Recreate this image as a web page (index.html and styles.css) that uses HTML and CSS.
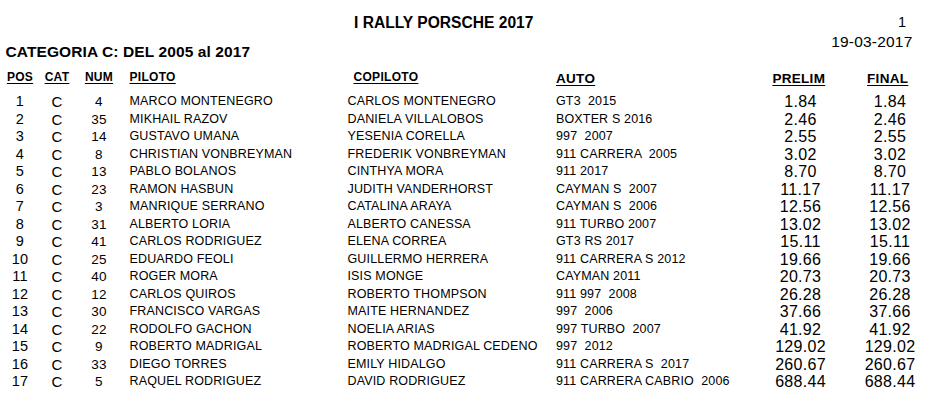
FILE: index.html
```html
<!DOCTYPE html>
<html lang="es">
<head>
<meta charset="utf-8">
<title>I RALLY PORSCHE 2017</title>
<link rel="stylesheet" href="styles.css">
</head>
<body>
<header class="top">
  <h1 class="title">I RALLY PORSCHE 2017</h1>
  <div class="page">1</div>
  <h2 class="cat-title">CATEGORIA C: DEL 2005 al 2017</h2>
  <div class="date">19-03-2017</div>
</header>
<main class="results">
  <div class="row head">
    <span class="c-pos">POS</span>
    <span class="c-cat">CAT</span>
    <span class="c-num">NUM</span>
    <span class="c-pil">PILOTO</span>
    <span class="c-cop">COPILOTO</span>
    <span class="c-auto big">AUTO</span>
    <span class="c-pre big">PRELIM</span>
    <span class="c-fin big">FINAL</span>
  </div>
  <div class="body">
    <div class="row"><span class="c-pos">1</span><span class="c-cat">C</span><span class="c-num">4</span><span class="c-pil">MARCO MONTENEGRO</span><span class="c-cop">CARLOS MONTENEGRO</span><span class="c-auto">GT3  2015</span><span class="c-pre">1.84</span><span class="c-fin">1.84</span></div>
    <div class="row"><span class="c-pos">2</span><span class="c-cat">C</span><span class="c-num">35</span><span class="c-pil">MIKHAIL RAZOV</span><span class="c-cop">DANIELA VILLALOBOS</span><span class="c-auto">BOXTER S 2016</span><span class="c-pre">2.46</span><span class="c-fin">2.46</span></div>
    <div class="row"><span class="c-pos">3</span><span class="c-cat">C</span><span class="c-num">14</span><span class="c-pil">GUSTAVO UMANA</span><span class="c-cop">YESENIA CORELLA</span><span class="c-auto">997  2007</span><span class="c-pre">2.55</span><span class="c-fin">2.55</span></div>
    <div class="row"><span class="c-pos">4</span><span class="c-cat">C</span><span class="c-num">8</span><span class="c-pil">CHRISTIAN VONBREYMAN</span><span class="c-cop">FREDERIK VONBREYMAN</span><span class="c-auto">911 CARRERA  2005</span><span class="c-pre">3.02</span><span class="c-fin">3.02</span></div>
    <div class="row"><span class="c-pos">5</span><span class="c-cat">C</span><span class="c-num">13</span><span class="c-pil">PABLO BOLANOS</span><span class="c-cop">CINTHYA MORA</span><span class="c-auto">911 2017</span><span class="c-pre">8.70</span><span class="c-fin">8.70</span></div>
    <div class="row"><span class="c-pos">6</span><span class="c-cat">C</span><span class="c-num">23</span><span class="c-pil">RAMON HASBUN</span><span class="c-cop">JUDITH VANDERHORST</span><span class="c-auto">CAYMAN S  2007</span><span class="c-pre">11.17</span><span class="c-fin">11.17</span></div>
    <div class="row"><span class="c-pos">7</span><span class="c-cat">C</span><span class="c-num">3</span><span class="c-pil">MANRIQUE SERRANO</span><span class="c-cop">CATALINA ARAYA</span><span class="c-auto">CAYMAN S  2006</span><span class="c-pre">12.56</span><span class="c-fin">12.56</span></div>
    <div class="row"><span class="c-pos">8</span><span class="c-cat">C</span><span class="c-num">31</span><span class="c-pil">ALBERTO LORIA</span><span class="c-cop">ALBERTO CANESSA</span><span class="c-auto">911 TURBO 2007</span><span class="c-pre">13.02</span><span class="c-fin">13.02</span></div>
    <div class="row"><span class="c-pos">9</span><span class="c-cat">C</span><span class="c-num">41</span><span class="c-pil">CARLOS RODRIGUEZ</span><span class="c-cop">ELENA CORREA</span><span class="c-auto">GT3 RS 2017</span><span class="c-pre">15.11</span><span class="c-fin">15.11</span></div>
    <div class="row"><span class="c-pos">10</span><span class="c-cat">C</span><span class="c-num">25</span><span class="c-pil">EDUARDO FEOLI</span><span class="c-cop">GUILLERMO HERRERA</span><span class="c-auto">911 CARRERA S 2012</span><span class="c-pre">19.66</span><span class="c-fin">19.66</span></div>
    <div class="row"><span class="c-pos">11</span><span class="c-cat">C</span><span class="c-num">40</span><span class="c-pil">ROGER MORA</span><span class="c-cop">ISIS MONGE</span><span class="c-auto">CAYMAN 2011</span><span class="c-pre">20.73</span><span class="c-fin">20.73</span></div>
    <div class="row"><span class="c-pos">12</span><span class="c-cat">C</span><span class="c-num">12</span><span class="c-pil">CARLOS QUIROS</span><span class="c-cop">ROBERTO THOMPSON</span><span class="c-auto">911 997  2008</span><span class="c-pre">26.28</span><span class="c-fin">26.28</span></div>
    <div class="row"><span class="c-pos">13</span><span class="c-cat">C</span><span class="c-num">30</span><span class="c-pil">FRANCISCO VARGAS</span><span class="c-cop">MAITE HERNANDEZ</span><span class="c-auto">997  2006</span><span class="c-pre">37.66</span><span class="c-fin">37.66</span></div>
    <div class="row"><span class="c-pos">14</span><span class="c-cat">C</span><span class="c-num">22</span><span class="c-pil">RODOLFO GACHON</span><span class="c-cop">NOELIA ARIAS</span><span class="c-auto">997 TURBO  2007</span><span class="c-pre">41.92</span><span class="c-fin">41.92</span></div>
    <div class="row"><span class="c-pos">15</span><span class="c-cat">C</span><span class="c-num">9</span><span class="c-pil">ROBERTO MADRIGAL</span><span class="c-cop">ROBERTO MADRIGAL CEDENO</span><span class="c-auto">997  2012</span><span class="c-pre">129.02</span><span class="c-fin">129.02</span></div>
    <div class="row"><span class="c-pos">16</span><span class="c-cat">C</span><span class="c-num">33</span><span class="c-pil">DIEGO TORRES</span><span class="c-cop">EMILY HIDALGO</span><span class="c-auto">911 CARRERA S  2017</span><span class="c-pre">260.67</span><span class="c-fin">260.67</span></div>
    <div class="row"><span class="c-pos">17</span><span class="c-cat">C</span><span class="c-num">5</span><span class="c-pil">RAQUEL RODRIGUEZ</span><span class="c-cop">DAVID RODRIGUEZ</span><span class="c-auto">911 CARRERA CABRIO  2006</span><span class="c-pre">688.44</span><span class="c-fin">688.44</span></div>
  </div>
</main>
</body>
</html>
```

FILE: styles.css
```css
html, body {
  margin: 0;
  padding: 0;
  background: #fff;
  overflow: hidden;
}
body {
  font-family: "Liberation Sans", Arial, Helvetica, sans-serif;
  color: #000;
  width: 936px;
  height: 403px;
}

/* ---------- top block ---------- */
.top {
  display: grid;
  grid-template-columns: 1fr auto;
  grid-template-rows: 19px 29.2px;
  padding-top: 12.5px;
}
.title {
  margin: 0;
  padding-left: 354px;
  font-size: 15.6px;
  line-height: 19px;
  font-weight: bold;
}
.page {
  font-size: 14.5px;
  line-height: 19px;
  text-align: right;
  padding-right: 30px;
}
.cat-title {
  margin: 0;
  padding-left: 5.5px;
  align-self: end;
  font-size: 15.5px;
  line-height: 19px;
  font-weight: bold;
  letter-spacing: 0.1px;
}
.date {
  align-self: start;
  font-size: 15.5px;
  line-height: 19px;
  letter-spacing: 0.2px;
  text-align: right;
  padding-right: 23.5px;
}

/* ---------- results table ---------- */
.results {
  margin-top: 8.5px;
}
.row {
  display: grid;
  grid-template-columns: 40px 34px 50px 223px 209px 204px 81px 98px;
  align-items: center;
  height: 17.5px;
}
.row > span {
  line-height: 17.5px;
  white-space: pre;
}

.head {
  height: 16px;
  align-items: start;
}
.head > span {
  font-weight: bold;
  font-size: 12px;
  line-height: 16px;
  letter-spacing: 0.3px;
  text-decoration: underline;
  text-decoration-thickness: 1.4px;
  text-underline-offset: 1.5px;
}
.head > span.big {
  font-size: 13.5px;
  padding-top: 1.6px;
}
.head .c-cop { padding-left: 6.5px; }
.head .c-pre { padding-right: 3.4px; }
.head .c-fin { padding-right: 4.6px; }

.body {
  margin-top: 8px;
}

.c-pos, .c-cat, .c-num, .c-pre, .c-fin {
  text-align: center;
}
.c-pil { padding-left: 5.5px; }
.c-cop { padding-left: 0.5px; }

.body .c-pos {
  font-size: 14.5px;
  letter-spacing: 0.2px;
}
.body .c-cat {
  font-size: 15px;
}
.body .c-num {
  font-size: 13.5px;
  letter-spacing: 0.3px;
}
.body .c-pil,
.body .c-cop,
.body .c-auto {
  font-size: 12.5px;
  letter-spacing: 0.15px;
}
.body .c-pre,
.body .c-fin {
  font-size: 16px;
  letter-spacing: 0.3px;
}
```
